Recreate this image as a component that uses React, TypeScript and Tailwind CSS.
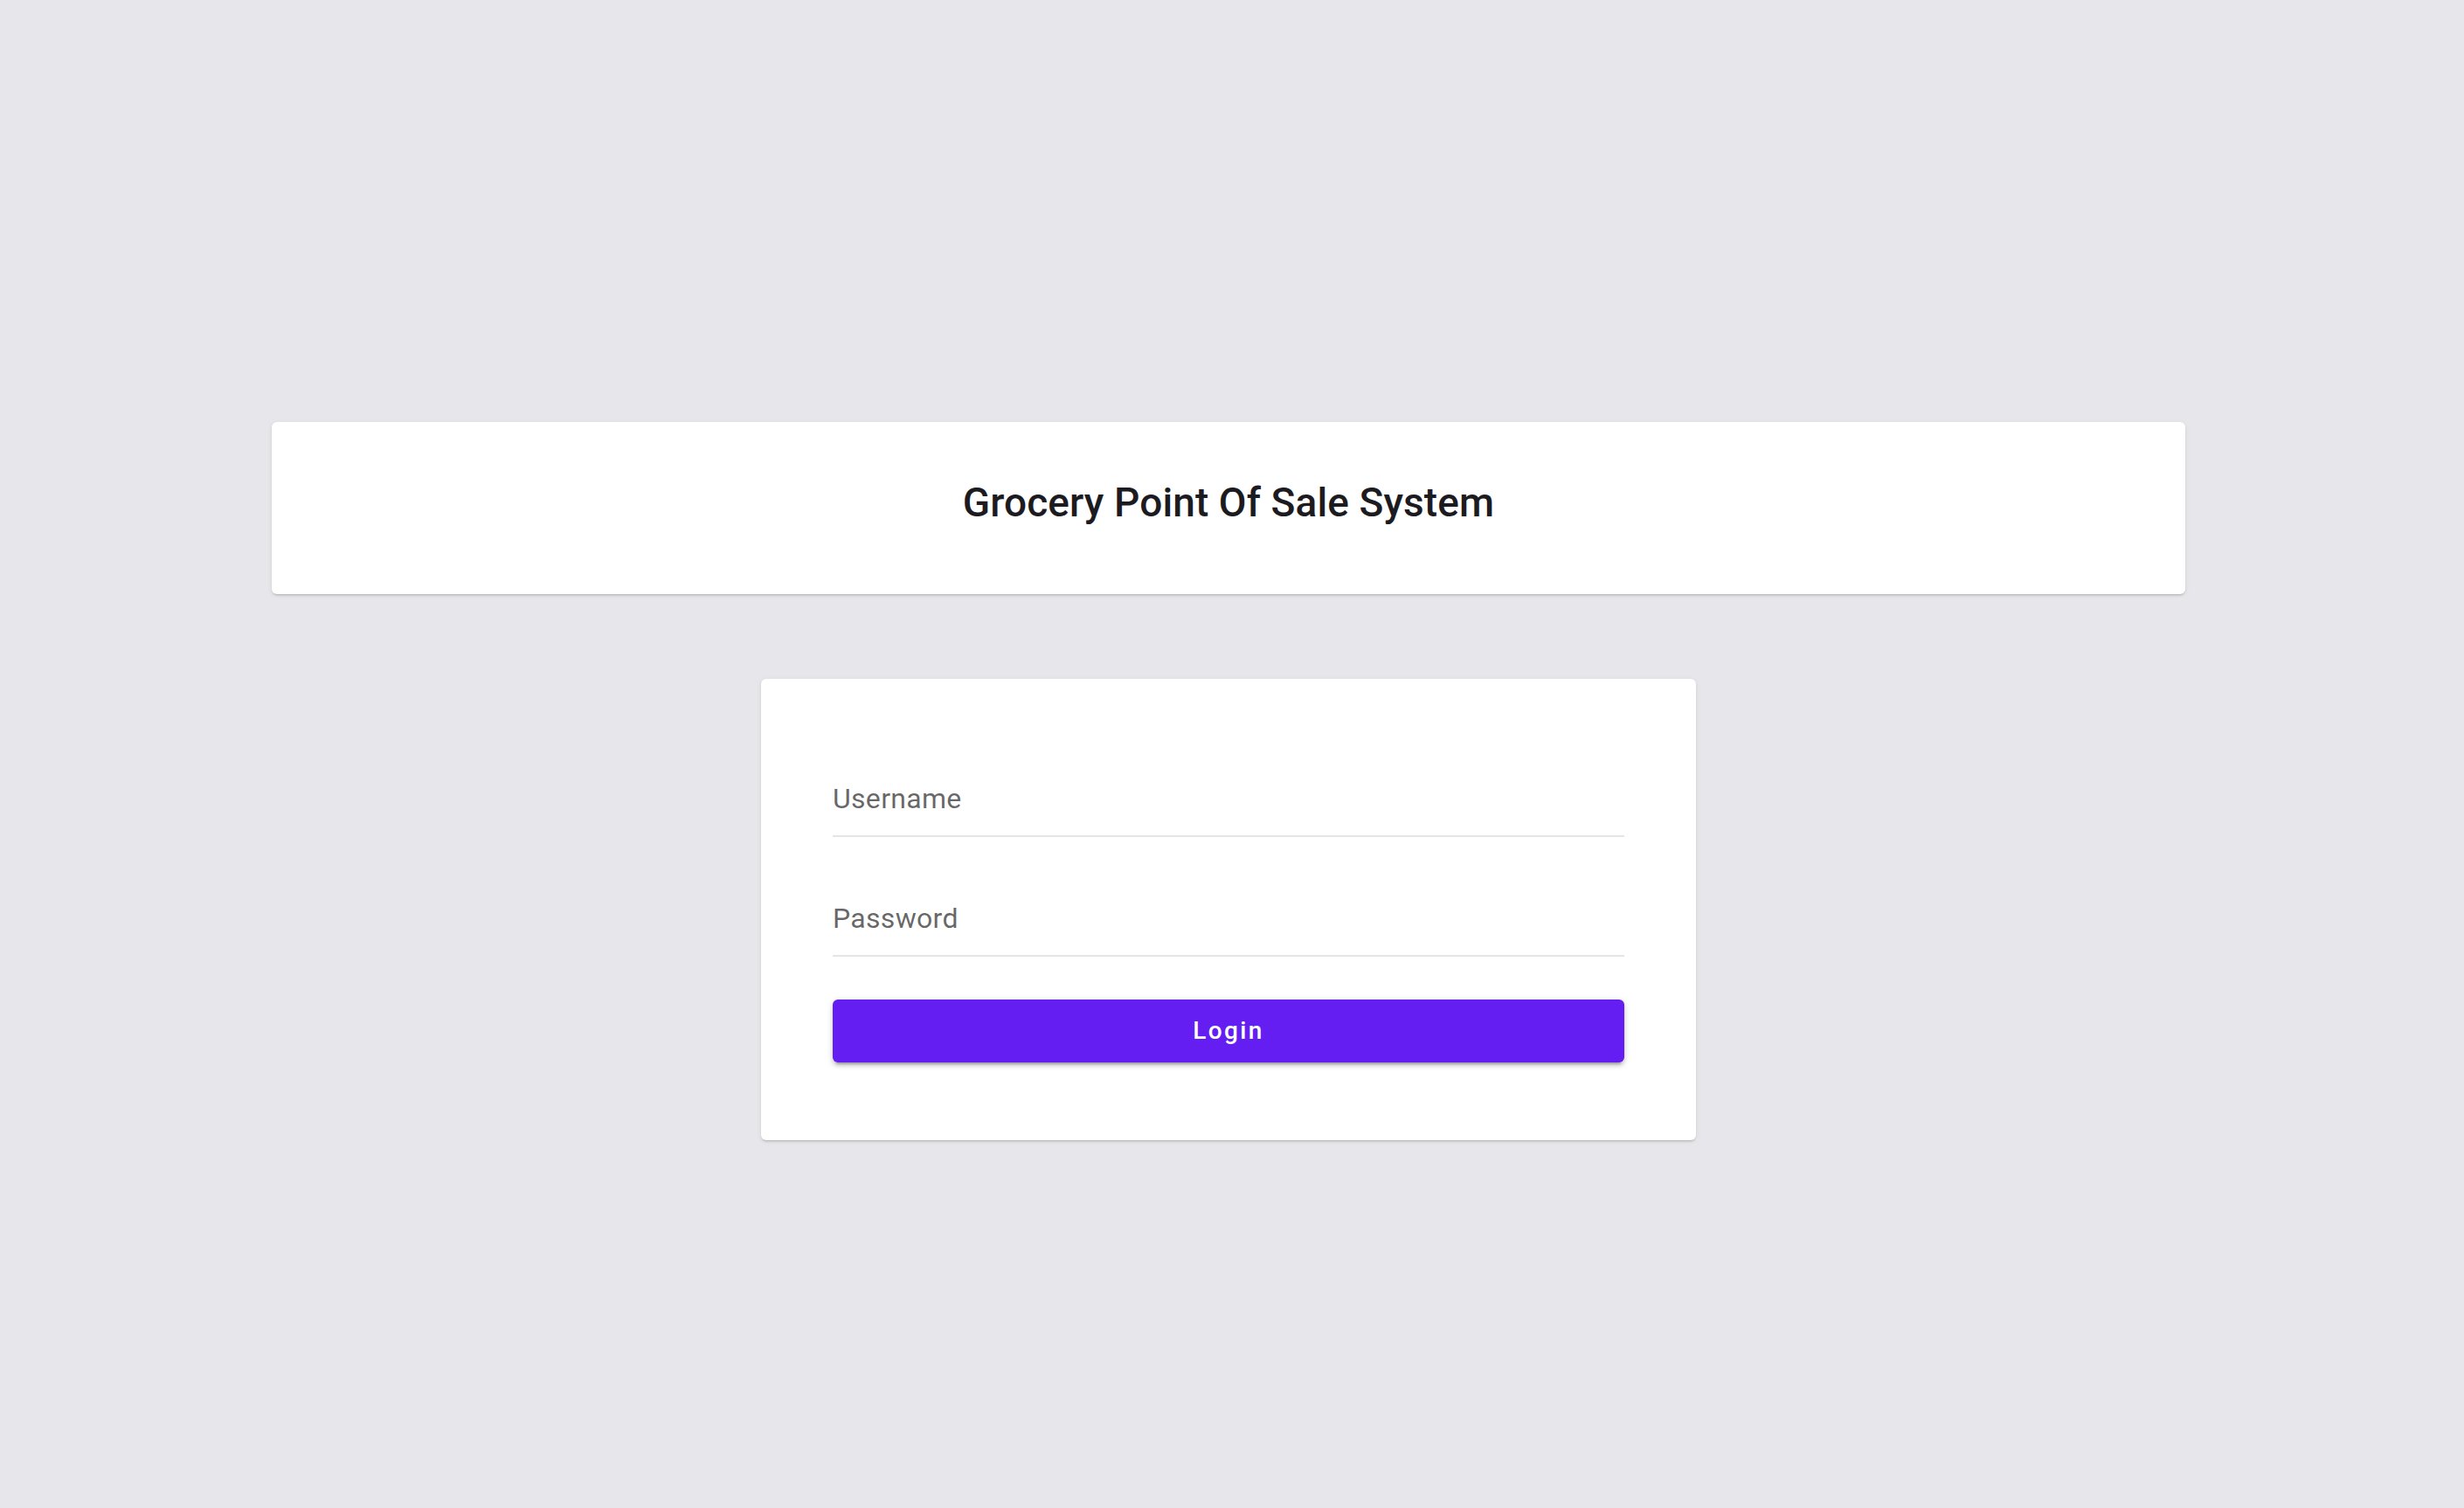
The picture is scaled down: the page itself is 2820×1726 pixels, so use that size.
import React from "react";

export default function App() {
  return (
    <div
      className="min-h-[1726px] w-full bg-[#e7e6eb]"
      style={{ fontFamily: "Roboto, 'Noto Sans', sans-serif" }}
    >
      <div className="w-[2812px] flex flex-col items-center pt-[483px]">
        <div className="w-[2190px] h-[197px] bg-white rounded-[6px] shadow-[0_3px_2px_-2px_rgba(0,0,0,0.12),0_2px_3px_0_rgba(0,0,0,0.07),0_1px_6px_0_rgba(0,0,0,0.06)] flex justify-center pt-[69px]">
          <h1 className="text-[46px] leading-[46px] font-medium text-[#1c1b1f] tracking-[0.1px]">
            Grocery Point Of Sale System
          </h1>
        </div>

        <div className="mt-[97px] w-[1070px] bg-white rounded-[6px] shadow-[0_3px_2px_-2px_rgba(0,0,0,0.12),0_2px_3px_0_rgba(0,0,0,0.07),0_1px_6px_0_rgba(0,0,0,0.06)] px-[82px] pt-[121px] pb-[89px] flex flex-col">
          <label className="block border-b-2 border-[#e4e4e9] pb-[26px]">
            <span className="block text-[32px] leading-[32px] text-[rgba(0,0,0,0.6)] tracking-[0.3px]">
              Username
            </span>
          </label>
          <label className="block mt-[77px] border-b-2 border-[#e4e4e9] pb-[26px]">
            <span className="block text-[32px] leading-[32px] text-[rgba(0,0,0,0.6)] tracking-[0.3px]">
              Password
            </span>
          </label>
          <button className="mt-[49px] h-[72px] w-full rounded-[6px] bg-[#651ef2] text-white text-[28px] font-medium tracking-[2.4px] shadow-[0_6px_2px_-4px_rgba(0,0,0,0.2),0_4px_4px_0_rgba(0,0,0,0.14),0_2px_10px_0_rgba(0,0,0,0.12)] flex items-center justify-center">
            Login
          </button>
        </div>
      </div>
    </div>
  );
}
